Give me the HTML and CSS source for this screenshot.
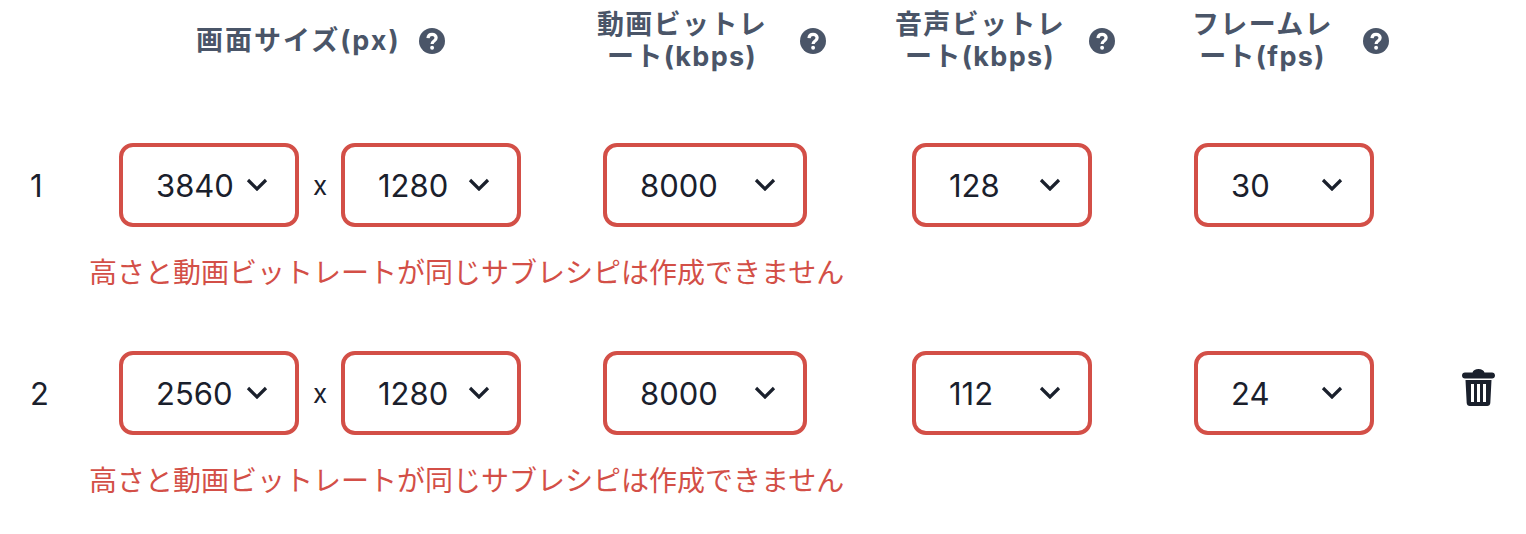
FILE: index.html
```html
<!DOCTYPE html>
<html lang="ja">
<head>
  <meta charset="UTF-8">
  <title>サブレシピ</title>
  <link rel="stylesheet" href="styles.css">
</head>
<body>
  <div class="recipe-table">
    <div class="head-row">
      <div></div>
      <div class="th th-size"><span>画面サイズ(px)</span><svg class="help" viewBox="0 0 24 24"><circle cx="12" cy="12" r="12"/><path d="M8.300 9.300c.2-2.200 1.800-3.500 3.800-3.500s3.700 1.300 3.700 3.200c0 1.500-.8 2.200-1.900 3-1.200.8-1.800 1.400-1.800 2.700" class="help-mark"/><circle cx="12.100" cy="18.200" r="1.800" class="help-dot"/></svg></div>
      <div class="th th-video"><span>動画ビットレ<br>ート(kbps)</span><svg class="help" viewBox="0 0 24 24"><circle cx="12" cy="12" r="12"/><path d="M8.300 9.300c.2-2.200 1.800-3.500 3.800-3.500s3.700 1.300 3.700 3.200c0 1.500-.8 2.200-1.900 3-1.200.8-1.800 1.400-1.800 2.700" class="help-mark"/><circle cx="12.100" cy="18.200" r="1.800" class="help-dot"/></svg></div>
      <div class="th th-audio"><span>音声ビットレ<br>ート(kbps)</span><svg class="help" viewBox="0 0 24 24"><circle cx="12" cy="12" r="12"/><path d="M8.300 9.300c.2-2.200 1.800-3.500 3.800-3.500s3.700 1.300 3.700 3.200c0 1.500-.8 2.200-1.900 3-1.200.8-1.800 1.400-1.800 2.700" class="help-mark"/><circle cx="12.100" cy="18.200" r="1.800" class="help-dot"/></svg></div>
      <div class="th th-fps"><span>フレームレ<br>ート(fps)</span><svg class="help" viewBox="0 0 24 24"><circle cx="12" cy="12" r="12"/><path d="M8.300 9.300c.2-2.200 1.800-3.500 3.800-3.500s3.700 1.300 3.700 3.200c0 1.500-.8 2.200-1.900 3-1.200.8-1.800 1.400-1.800 2.700" class="help-mark"/><circle cx="12.100" cy="18.200" r="1.800" class="help-dot"/></svg></div>
    </div>

    <div class="row">
      <div class="td-num">1</div>
      <div class="td td-size">
        <div class="select"><select><option>3840</option></select><svg class="chevron" viewBox="0 0 22 13"><path d="M2 2l9 9 9-9"/></svg></div>
        <span class="times">x</span>
        <div class="select"><select><option>1280</option></select><svg class="chevron" viewBox="0 0 22 13"><path d="M2 2l9 9 9-9"/></svg></div>
      </div>
      <div class="td td-video"><div class="select select-wide"><select><option>8000</option></select><svg class="chevron" viewBox="0 0 22 13"><path d="M2 2l9 9 9-9"/></svg></div></div>
      <div class="td td-audio"><div class="select"><select><option>128</option></select><svg class="chevron" viewBox="0 0 22 13"><path d="M2 2l9 9 9-9"/></svg></div></div>
      <div class="td td-fps"><div class="select"><select><option>30</option></select><svg class="chevron" viewBox="0 0 22 13"><path d="M2 2l9 9 9-9"/></svg></div></div>
      <div></div>
    </div>
    <p class="error">高さと動画ビットレートが同じサブレシピは作成できません</p>

    <div class="row">
      <div class="td-num">2</div>
      <div class="td td-size">
        <div class="select"><select><option>2560</option></select><svg class="chevron" viewBox="0 0 22 13"><path d="M2 2l9 9 9-9"/></svg></div>
        <span class="times">x</span>
        <div class="select"><select><option>1280</option></select><svg class="chevron" viewBox="0 0 22 13"><path d="M2 2l9 9 9-9"/></svg></div>
      </div>
      <div class="td td-video"><div class="select select-wide"><select><option>8000</option></select><svg class="chevron" viewBox="0 0 22 13"><path d="M2 2l9 9 9-9"/></svg></div></div>
      <div class="td td-audio"><div class="select"><select><option>112</option></select><svg class="chevron" viewBox="0 0 22 13"><path d="M2 2l9 9 9-9"/></svg></div></div>
      <div class="td td-fps"><div class="select"><select><option>24</option></select><svg class="chevron" viewBox="0 0 22 13"><path d="M2 2l9 9 9-9"/></svg></div></div>
      <div class="td-delete">
        <svg class="trash" viewBox="0 0 33 37"><path d="M10.500 3.500c.6-2.300 3-3.500 6-3.500s5.400 1.200 6 3.500H30c1.700 0 3 1.300 3 3s-1.300 3-3 3H3c-1.700 0-3-1.300-3-3s1.300-3 3-3h7.500z"/><path fill-rule="evenodd" d="M3.500 11h26l-1.200 23c-.1 1.700-1.400 3-3.100 3H7.800c-1.700 0-3-1.300-3.100-3L3.500 11zm5.500 4v18h3V15H9zm6 0v18h3V15h-3zm6 0v18h3V15h-3z"/></svg>
      </div>
    </div>
    <p class="error">高さと動画ビットレートが同じサブレシピは作成できません</p>
  </div>
</body>
</html>
```

FILE: styles.css
```css
* {
  box-sizing: border-box;
}

body {
  margin: 0;
  background: #fff;
  color: #1a202c;
  font-family: "Inter", "Noto Sans CJK JP", sans-serif;
}

.head-row,
.row {
  display: grid;
  grid-template-columns: 90px 470px 290px 282px 290px 1fr;
}

.head-row {
  height: 82px;
  margin-bottom: 61px;
}

.th {
  display: flex;
  align-items: center;
  color: #4a5568;
  font-size: 27px;
  font-weight: 700;
  line-height: 32px;
  letter-spacing: 1.35px;
  text-align: center;
}

.th span {
  flex: none;
}

.th-size {
  padding-left: 106px;
  gap: 18px;
  letter-spacing: 2px;
}

.th-video {
  padding-left: 37px;
  gap: 33px;
}

.th-audio {
  padding-left: 45px;
  gap: 24px;
}

.th-fps {
  padding-left: 60px;
  gap: 30px;
}

.help {
  flex: none;
  width: 26px;
  height: 26px;
  fill: #4a5568;
}

.help-mark {
  fill: none;
  stroke: #fff;
  stroke-width: 3;
}

.help-dot {
  fill: #fff;
}

.row {
  height: 84px;
  align-items: center;
}

.td-num {
  padding-left: 30px;
  font-size: 31px;
}

.td {
  display: flex;
  align-items: center;
}

.td-size {
  padding-left: 29px;
}

.td-video {
  padding-left: 43px;
}

.td-audio {
  padding-left: 62px;
}

.td-fps {
  padding-left: 62px;
}

.td-delete {
  display: flex;
  padding-left: 40px;
}

.times {
  width: 42px;
  text-align: center;
  font-size: 26px;
}

.select {
  position: relative;
  width: 180px;
  height: 84px;
}

.select-wide {
  width: 204px;
}

.select select {
  appearance: none;
  width: 100%;
  height: 100%;
  padding: 0 58px 0 33px;
  border: 4px solid #d34f47;
  border-radius: 14px;
  background: #fff;
  color: #1a202c;
  font-family: inherit;
  font-size: 31px;
}

.chevron {
  position: absolute;
  top: 35px;
  right: 31px;
  width: 22px;
  height: 13px;
  fill: none;
  stroke: #1a202c;
  stroke-width: 3.200;
}

.trash {
  width: 33px;
  height: 37px;
  margin-top: -12px;
  fill: #1a202c;
}

.error {
  height: 124px;
  margin: 0;
  padding: 27px 0 0 89px;
  color: #d34f47;
  font-size: 28px;
  line-height: 38px;
}
```
